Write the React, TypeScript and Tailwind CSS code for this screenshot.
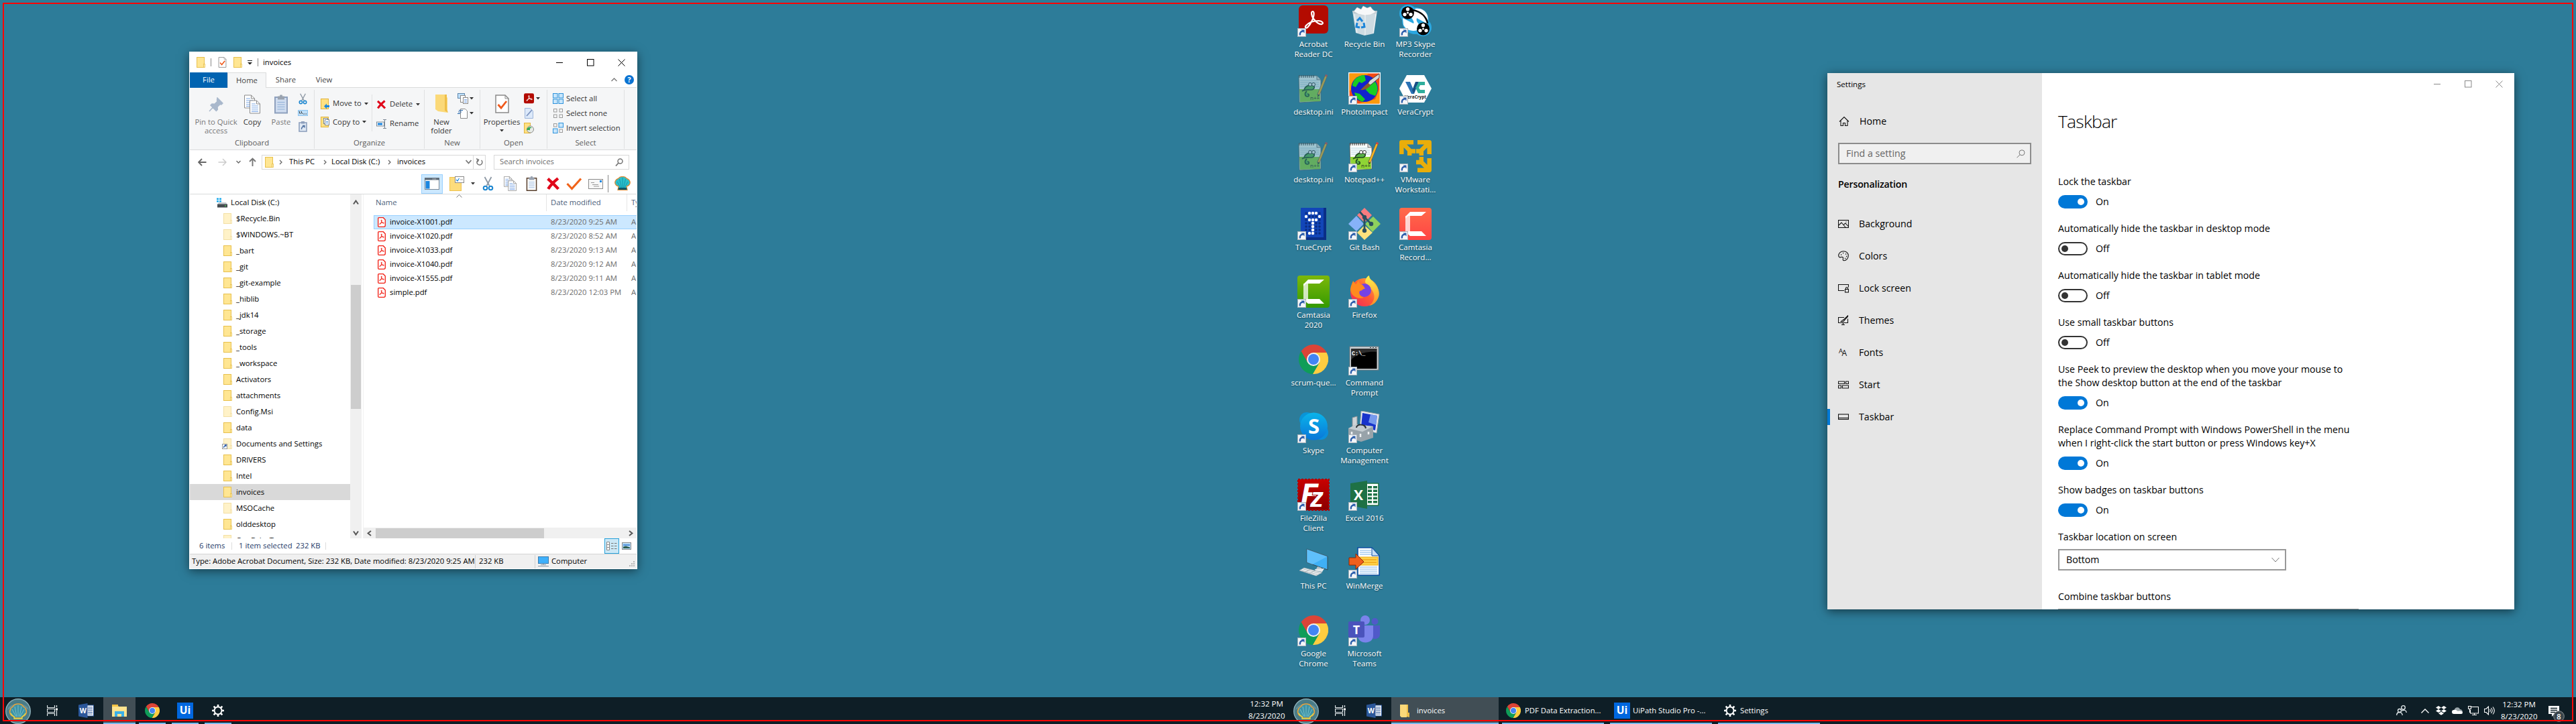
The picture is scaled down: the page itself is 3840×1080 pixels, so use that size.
import React from "react";

type P = { className?: string };
type Kids = { children?: React.ReactNode };

const Svg = ({ w, h, vb, className = "", children }: { w: number; h: number; vb?: string; className?: string } & Kids) => (
  <svg width={w} height={h} viewBox={vb ?? `0 0 ${w} ${h}`} className={`shrink-0 ${className}`} fill="none">
    {children}
  </svg>
);

/* ---------- shared small icons ---------- */

const Folder = ({ className = "" }: P) => (
  <Svg w={13} h={16} className={className}>
    <rect x=".5" y=".5" width="11" height="15" fill="#ffe693" stroke="#e8c04c" />
    <rect x="10.5" y="10.5" width="2" height="5" fill="#ffefb5" stroke="#e8c04c" strokeWidth=".8" />
  </Svg>
);

const DocLines = ({ x = 0, y = 0 }: { x?: number; y?: number }) => (
  <g transform={`translate(${x} ${y})`}>
    <path d="M.5.5h10l5 5v14H.5z" fill="#fff" stroke="#8a8a8a" />
    <path d="M10.5.5v5h5" stroke="#8a8a8a" />
    <path d="M3 5.5h6M3 8.5h10M3 11.5h10M3 14.5h10M3 17h10" stroke="#7fa9e6" strokeWidth="1.2" />
  </g>
);

const CopyDocs = ({ w, h }: { w: number; h: number }) => (
  <Svg w={w} h={h} vb="0 0 24 28">
    <DocLines />
    <DocLines x={8} y={8} />
  </Svg>
);

const Clip = ({ w, h, board, paper }: { w: number; h: number; board: string; paper: string }) => (
  <Svg w={w} h={h} vb="0 0 20 28">
    <rect x="1" y="3.5" width="18" height="23.5" fill={paper} stroke={board} strokeWidth="2" />
    <rect x="5" y="2" width="10" height="5" fill="#9aa3b0" />
    <rect x="8" y="0" width="4" height="3" rx="1" fill="#9aa3b0" />
    <path d="M4.500 11h11M4.500 14.500h11M4.500 18h11M4.500 21.500h11" stroke="#8fb0d8" strokeWidth="1.200" />
  </Svg>
);

const Scissors = ({ w, h }: { w: number; h: number }) => (
  <Svg w={w} h={h} vb="0 0 16 22">
    <path d="M3 1l7 13M13 1L6 14" stroke="#8e99a5" strokeWidth="1.800" />
    <circle cx="4" cy="17.500" r="2.800" stroke="#1b86d0" strokeWidth="2" />
    <circle cx="12" cy="17.500" r="2.800" stroke="#1b86d0" strokeWidth="2" />
  </Svg>
);

const RedX = ({ w, h }: { w: number; h: number }) => (
  <Svg w={w} h={h} vb="0 0 20 19">
    <path d="M2.500 2.500c4 3.500 10 9 15 14.500M17 2C12 6 6 12 3 17" stroke="#e0081a" strokeWidth="4.200" />
  </Svg>
);

const DocCheck = ({ w, h }: { w: number; h: number }) => (
  <Svg w={w} h={h} vb="0 0 21 28">
    <path d="M1 1h14l5 5v21H1z" fill="#fff" stroke="#8a8a8a" strokeWidth="1.500" />
    <path d="M15 1v5h5" stroke="#8a8a8a" />
    <path d="M4.500 15l4.500 5 8-10" stroke="#f0591b" strokeWidth="2.800" />
  </Svg>
);

const Caret = ({ className = "", color = "#333" }: P & { color?: string }) => (
  <Svg w={6} h={4} className={className}>
    <path d="M0 0h6L3 3.500z" fill={color} />
  </Svg>
);

const Chev = ({ className = "", d = "M1 1l3 3-3 3", color = "#666", w = 6, h = 8, sw = 1.3 }: P & { d?: string; color?: string; w?: number; h?: number; sw?: number }) => (
  <Svg w={w} h={h} className={className}>
    <path d={d} stroke={color} strokeWidth={sw} />
  </Svg>
);

const Pdf = () => (
  <Svg w={12} h={15}>
    <path d="M1.700.700h6.600l3 3v8.600a2 2 0 0 1-2 2H1.700a1 1 0 0 1-1-1V1.700a1 1 0 0 1 1-1z" fill="#fff" stroke="#f21d12" strokeWidth="1.300" />
    <path d="M5.800 4c-1 0-.5 2 .5 3.300.9 1.200 2.200 2.100 2.900 1.800.8-.5-.7-1.200-2.200-1-1.800.2-3.600.9-4.100 1.900-.4.900.8.800 1.500-.4C5.500 7.800 6.600 4 5.800 4z" stroke="#f21d12" strokeWidth="1" />
  </Svg>
);

const Swirl = ({ sw = 1.8 }: { sw?: number }) => (
  <path d="M23 10c-3 0-2.500 6 1 11 4 5 9 9 12.500 8 3.500-1.500 0-5-5-5-7 0-14.500 2.500-18.500 7-2.500 3 0 5 2.500 2.500C20 29 25.500 18 24.500 12c-.2-1-.7-2-1.500-2z" stroke="#fff" strokeWidth={sw} />
);

const Shell = ({ w, h }: { w: number; h: number }) => (
  <Svg w={w} h={h} vb="0 0 24 22">
    <path d="M6 15C1 14-.5 9 2 6c1-2 3-2 4-3 1.500-2 4-2.500 6-2.500S16.500 1 18 3c1 1 3 1 4 3 2.500 3 1 8-4 9l1 5.500H5z" fill="#2cc0cb" stroke="#e0862c" strokeWidth="1.200" />
    <path d="M12 2v15M7.500 4l3 13M16.500 4l-3 13M4 8l5 9M20 8l-5 9" stroke="#1593a8" strokeWidth=".9" />
    <path d="M6 17h12l.5 3h-13z" fill="#12586a" />
  </Svg>
);

const Chrome = ({ size }: { size: number }) => (
  <Svg w={size} h={size} vb="2 2 44 44">
    <path d="M5.550 12.020A22 22 0 0 1 43.600 14H24v10l-8.660 5z" fill="#db4437" />
    <path d="M43.600 14A22 22 0 0 1 22.850 45.970L32.660 29 24 24V14z" fill="#ffcd40" />
    <path d="M22.850 45.970A22 22 0 0 1 5.550 12.020L15.340 29 24 24l8.660 5z" fill="#0f9d58" />
    <circle cx="24" cy="24" r="10" fill="#f1f1f1" />
    <circle cx="24" cy="24" r="8" fill="#4285f4" />
  </Svg>
);

/* ---------- explorer ---------- */

const MenuText = ({ children, className = "" }: Kids & P) => <span className={`whitespace-nowrap ${className}`}>{children}</span>;

const Group = ({ label, className = "", children }: { label: string; className?: string } & Kids) => (
  <div className={`flex h-[88px] shrink-0 flex-col border-r border-[#e0e1e2] ${className}`}>
    <div className="h-[71px]">{children}</div>
    <div className="text-center leading-[16px] text-[#5a5a5a]">{label}</div>
  </div>
);

const BigButton = ({ icon, lines, className = "" }: { icon: React.ReactNode; lines: React.ReactNode[]; className?: string }) => (
  <div className={`flex flex-col items-center text-center leading-[13px] ${className}`}>
    <div className="mb-[2px] flex h-[36px] items-center justify-center">{icon}</div>
    {lines.map((l, i) => (
      <div key={i} className="flex h-[13px] items-center whitespace-nowrap">{l}</div>
    ))}
  </div>
);

const MoveIcon = ({ copy = false }: { copy?: boolean }) => (
  <Svg w={14} h={16}>
    <rect x=".5" y=".5" width="11" height="15" fill="#ffe182" stroke="#e2b43c" />
    {copy ? (
      <g>
        <rect x="4.500" y="2.500" width="6" height="8" fill="#fff" stroke="#7a8794" />
        <rect x="6.500" y="4.500" width="6" height="8" fill="#fff" stroke="#7a8794" />
        <path d="M8 7.500h3M8 9.500h3" stroke="#4a90d9" />
      </g>
    ) : (
      <path d="M5 11.500l4-4v2.500h4v3H9v2.500z" fill="#1b86e0" />
    )}
  </Svg>
);

const SelIcon = ({ on }: { on: boolean[] }) => (
  <Svg w={16} h={16}>
    {on.map((o, i) => (
      <rect
        key={i}
        x={(i % 2) * 8.5 + (o ? 0.5 : 1.5)}
        y={Math.floor(i / 2) * 8.5 + (o ? 0.5 : 1.5)}
        width={o ? 6.5 : 4.5}
        height={o ? 6.5 : 4.5}
        fill={o ? "#c8e6fb" : "#f5f6f7"}
        stroke={o ? "#2e93dc" : "#9a9a9a"}
      />
    ))}
  </Svg>
);

const Ribbon = () => (
  <div className="flex h-[93px] shrink-0 border-b border-[#d9dadb] bg-[#f5f6f7] pt-[3px] text-[#333]">
    <Group label="Clipboard" className="w-[186px]">
      <div className="flex pt-[3px]">
        <BigButton
          className="ml-[4px] w-[70px] text-[#777]"
          icon={
            <Svg w={22} h={22} className="mt-[1px]">
              <path d="M13 1l8 8-2 2-2-.5-4 4 .3 4-2 2L3 12l2-2 4 .3 4-4-.5-2zM6.500 15L1 21" fill="#a9b8cc" stroke="#a9b8cc" strokeWidth="1.500" />
            </Svg>
          }
          lines={["Pin to Quick", "access"]}
        />
        <BigButton className="w-[38px]" icon={<CopyDocs w={24} h={29} />} lines={["Copy"]} />
        <BigButton className="ml-[4px] w-[40px] text-[#777]" icon={<Clip w={20} h={29} board="#8ea0bd" paper="#cfdcef" />} lines={["Paste"]} />
        <div className="ml-[3px] flex h-[60px] w-[18px] flex-col items-center justify-between pt-[2px]">
          <Scissors w={13} h={17} />
          <Svg w={15} h={9}>
            <rect x=".5" y=".5" width="14" height="8" fill="#bfe0fa" stroke="#8cc3ee" />
            <path d="M2 2l1.500 4M5 2l1.500 4M8 6h1M10 6h1M12 6h1" stroke="#222" />
          </Svg>
          <Svg w={13} h={16}>
            <rect x="1" y="2" width="11" height="13" fill="#dfe8f3" stroke="#8ea0bd" strokeWidth="1.600" />
            <rect x="4" y="0" width="5" height="3.500" fill="#8ea0bd" />
            <path d="M4.500 12c0-3 1-4.500 4-4.500M6 6.500h3v3" stroke="#5575a3" strokeWidth="1.400" />
          </Svg>
        </div>
      </div>
    </Group>
    <Group label="Organize" className="w-[164px]">
      <div className="flex pl-[9px] pt-[7px]">
        <div className="flex h-[55px] w-[77px] flex-col border-r border-[#e0e1e2]">
          <div className="flex h-[29px] items-center gap-[4px]"><MoveIcon /><MenuText>Move to</MenuText><Caret /></div>
          <div className="flex h-[29px] items-center gap-[4px]"><MoveIcon copy /><MenuText>Copy to</MenuText><Caret /></div>
        </div>
        <div className="flex flex-col pl-[6px]">
          <div className="flex h-[29px] items-center gap-[5px]"><RedX w={15} h={14} /><MenuText>Delete</MenuText><Caret /></div>
          <div className="flex h-[29px] items-center gap-[4px]">
            <Svg w={16} h={14}>
              <rect x=".5" y="4" width="11" height="6" fill="#fff" stroke="#7a8794" />
              <rect x="2" y="5.500" width="7" height="3" fill="#1b86e0" />
              <path d="M10 .5h5M12.500.5v13M10 13.500h5" stroke="#7a8794" />
            </Svg>
            <MenuText>Rename</MenuText>
          </div>
        </div>
      </div>
    </Group>
    <Group label="New" className="w-[83px]">
      <div className="flex pt-[3px]">
        <BigButton
          className="ml-[4px] w-[42px]"
          icon={
            <Svg w={19} h={28}>
              <path d="M0 0h14l4 5v22L4 25 0 22z" fill="#fbd979" />
              <path d="M14 0h3v22l2 5-5-3z" fill="#eebf4a" />
            </Svg>
          }
          lines={["New", "folder"]}
        />
        <div className="flex flex-col gap-[6px] pl-[3px] pt-[2px]">
          <div className="flex items-center gap-[2px]">
            <Svg w={16} h={16}>
              <rect x=".5" y=".5" width="10" height="7" fill="#bfe0fa" stroke="#5d87ad" />
              <rect x="4.500" y="3.500" width="7" height="10" fill="#fff" stroke="#8a8a8a" />
              <rect x="8.500" y="6.500" width="7" height="9" fill="#fff" stroke="#8a8a8a" />
              <path d="M10 9.500h4M10 11.500h4M10 13.500h4" stroke="#7fa9e6" />
            </Svg>
            <Caret />
          </div>
          <div className="flex items-center gap-[2px]">
            <Svg w={16} h={16}>
              <path d="M4.500 1.500h7l3 3v11h-10z" fill="#fff" stroke="#8a8a8a" />
              <path d="M2 3.500h6M1 6h5M0 8.500h4" stroke="#1b5fa8" strokeWidth="1.200" />
            </Svg>
            <Caret />
          </div>
        </div>
      </div>
    </Group>
    <Group label="Open" className="w-[100px]">
      <div className="flex pt-[3px]">
        <BigButton className="ml-[3px] w-[58px]" icon={<DocCheck w={21} h={28} />} lines={["Properties", <Caret key="c" />]} />
        <div className="flex flex-col gap-[6px] pl-[4px] pt-[2px]">
          <div className="flex items-center gap-[3px]">
            <Svg w={15} h={16} vb="0 0 46 48"><rect width="46" height="46" rx="7" fill="#b30b00" /><Swirl sw={3} /></Svg>
            <Caret />
          </div>
          <Svg w={15} h={16}>
            <path d="M1.500.5h8l4 4v11h-12z" fill="#dce9fa" stroke="#9db5da" />
            <path d="M4 12l8-9" stroke="#7c93bf" strokeWidth="1.800" />
          </Svg>
          <Svg w={15} h={16}>
            <rect x=".5" y=".5" width="9" height="15" fill="#ffe182" stroke="#e2b43c" />
            <circle cx="9.500" cy="10" r="5" fill="#e8ece8" stroke="#8a8a8a" />
            <path d="M4 10.500c1-4 5-5 8-3l-3 1v3c-2-1-4 0-5-1z" fill="#35a853" />
          </Svg>
        </div>
      </div>
    </Group>
    <Group label="Select" className="w-[115px]">
      <div className="flex flex-col gap-[6px] pl-[8px] pt-[5px]">
        <div className="flex items-center gap-[4px] leading-[16px]"><SelIcon on={[true, true, true, true]} /><MenuText>Select all</MenuText></div>
        <div className="flex items-center gap-[4px] leading-[16px]"><SelIcon on={[false, false, false, false]} /><MenuText>Select none</MenuText></div>
        <div className="flex items-center gap-[4px] leading-[16px]"><SelIcon on={[false, true, true, false]} /><MenuText>Invert selection</MenuText></div>
      </div>
    </Group>
  </div>
);

const TREE: [string, boolean][] = [
  ["$Recycle.Bin", true], ["$WINDOWS.~BT", true], ["_bart", false], ["_git", false], ["_git-example", false],
  ["_hiblib", false], ["_jdk14", false], ["_storage", false], ["_tools", false], ["_workspace", false],
  ["Activators", false], ["attachments", false], ["Config.Msi", true], ["data", false], ["Documents and Settings", true],
  ["DRIVERS", false], ["Intel", false], ["invoices", false], ["MSOCache", true], ["olddesktop", false], ["OneDriveTemp", true],
];

const FILES = [
  ["invoice-X1001.pdf", "8/23/2020 9:25 AM"], ["invoice-X1020.pdf", "8/23/2020 8:52 AM"], ["invoice-X1033.pdf", "8/23/2020 9:13 AM"],
  ["invoice-X1040.pdf", "8/23/2020 9:12 AM"], ["invoice-X1555.pdf", "8/23/2020 9:11 AM"], ["simple.pdf", "8/23/2020 12:03 PM"],
];

const Explorer = () => (
  <div className="absolute left-[282px] top-[77px] flex h-[772px] w-[668px] flex-col overflow-hidden border border-white bg-white text-[11.3px] text-black shadow-[0_3px_14px_rgba(0,0,0,0.5)]">
    {/* title bar */}
    <div className="flex h-[30px] shrink-0 items-center pl-[10px]">
      <Folder />
      <div className="ml-[8px] h-[12px] w-px bg-[#888]" />
      <div className="ml-[10px]"><DocCheck w={13} h={16} /></div>
      <Folder className="ml-[10px]" />
      <Svg w={7} h={7} className="ml-[8px]"><path d="M0 .5h7" stroke="#222" /><path d="M0 3h7L3.500 6.500z" fill="#222" /></Svg>
      <div className="ml-[8px] h-[12px] w-px bg-[#888]" />
      <span className="ml-[7px]">invoices</span>
      <div className="ml-auto mr-[17px] flex items-center">
        <Svg w={10} h={10} className="mr-[36px]"><path d="M0 5.500h10" stroke="#000" /></Svg>
        <Svg w={11} h={11} className="mr-[35px]"><rect x=".5" y=".5" width="9.500" height="9.500" stroke="#000" /></Svg>
        <Svg w={11} h={11}><path d="M.5.5l10 10M10.500.5l-10 10" stroke="#000" /></Svg>
      </div>
    </div>
    {/* tabs */}
    <div className="flex h-[23px] shrink-0 text-[#444]">
      <div className="flex w-[56px] items-center justify-center bg-[#0063b1] text-white">File</div>
      <div className="flex w-[58px] items-center justify-center border-x border-t border-[#dadbdc] bg-[#f5f6f7]">Home</div>
      <div className="flex flex-1 items-center border-b border-[#dadbdc]">
        <span className="w-[58px] text-center">Share</span>
        <span className="w-[56px] text-center">View</span>
        <Chev className="ml-auto" w={9} h={6} d="M.5 5l4-4 4 4" color="#777" />
        <Svg w={14} h={14} className="ml-[11px] mr-[4px]">
          <circle cx="7" cy="7" r="7" fill="#0a73d2" />
          <text x="7" y="10.800" textAnchor="middle" fontSize="10.500" fontWeight="700" fill="#fff">?</text>
        </Svg>
      </div>
    </div>
    <Ribbon />
    {/* address row */}
    <div className="flex h-[35px] shrink-0 items-center">
      <Svg w={13} h={12} className="ml-[12px]"><path d="M12.500 6H1M6 1L1 6l5 5" stroke="#666" strokeWidth="1.800" /></Svg>
      <Svg w={13} h={12} className="ml-[17px]"><path d="M.5 6H12M7 1l5 5-5 5" stroke="#ccc" strokeWidth="1.500" /></Svg>
      <Chev className="ml-[14px]" w={7} h={5} d="M.5 1l3 3 3-3" color="#666" />
      <Svg w={11} h={13} className="ml-[12px]"><path d="M5.500 13V1.500M1 6l4.500-4.500L10 6" stroke="#777" strokeWidth="1.900" /></Svg>
      <div className="ml-[8px] flex h-[22px] w-[334px] items-center border border-[#d9d9d9] pl-[4px]">
        <Folder />
        <Chev className="ml-[8px]" />
        <span className="ml-[9px] w-[51px] whitespace-nowrap">This PC</span>
        <Chev />
        <span className="ml-[6px] w-[86px] whitespace-nowrap">Local Disk (C:)</span>
        <Chev className="-ml-[2px]" />
        <span className="ml-[8px]">invoices</span>
        <Chev className="ml-auto mr-[2px]" w={9} h={7} d="M.5 1l4 4.500L8.500 1" color="#777" sw={1.8} />
        <div className="flex h-[20px] w-[18px] items-center justify-center border-l border-[#d9d9d9]">
          <Svg w={11} h={12}><path d="M8.500 3A4 4 0 1 1 4 2.500M1 .8l3.500 1.500L3 5.500" stroke="#777" strokeWidth="1.500" /></Svg>
        </div>
      </div>
      <div className="ml-[12px] flex h-[22px] w-[202px] items-center justify-between border border-[#d9d9d9] pl-[8px] pr-[8px] text-[#6d6d6d]">
        <span>Search invoices</span>
        <Svg w={12} h={12}><circle cx="7.500" cy="4.500" r="3.500" stroke="#777" strokeWidth="1.500" /><path d="M5 7L1 11.500" stroke="#777" strokeWidth="1.800" /></Svg>
      </div>
    </div>
    {/* command row */}
    <div className="flex h-[31px] shrink-0 items-center border-b border-[#d9dadb] pl-[345px]">
      <div className="flex h-[29px] w-[32px] shrink-0 items-center justify-center border border-[#99d1ff] bg-[#cce8ff]">
        <Svg w={22} h={18}><rect x=".5" y=".5" width="21" height="17" fill="#fff" stroke="#7a8794" /><path d="M0 2h22" stroke="#5d6b78" strokeWidth="3" /><rect x="1.500" y="5" width="6" height="11.500" fill="#1b86e0" /><path d="M12 2h6" stroke="#fff" strokeDasharray="1 1" /></Svg>
      </div>
      <Svg w={22} h={23} className="ml-[10px]"><rect x=".5" y="1.500" width="17" height="20" fill="#fddc7c" stroke="#eec350" /><rect x="8.500" y=".5" width="13" height="9" fill="#fff" stroke="#8a8a8a" /><path d="M10 5l2 2 2.500-4" stroke="#1b86e0" strokeWidth="1.200" /><path d="M16 5h4" stroke="#999" /></Svg>
      <Caret className="ml-[10px]" />
      <div className="ml-[11px] shrink-0"><Scissors w={17} h={22} /></div>
      <div className="ml-[15px] shrink-0"><CopyDocs w={19} h={22} /></div>
      <div className="ml-[14px] shrink-0"><Clip w={17} h={22} board="#5c4432" paper="#fff" /></div>
      <div className="ml-[13px] shrink-0"><RedX w={21} h={20} /></div>
      <Svg w={24} h={19} className="ml-[9px]"><path d="M1.500 9l7 7.500L22 1.500" stroke="#f0641b" strokeWidth="3.200" /></Svg>
      <Svg w={22} h={15} className="ml-[9px]"><rect x=".5" y=".5" width="21" height="14" fill="#f7f7f7" stroke="#8a8a8a" /><rect x="17" y="2" width="3" height="3" fill="#1b86e0" /><path d="M4 5.500h5M6 8.500h9M8 11h8" stroke="#999" /></Svg>
      <div className="ml-[7px] h-[26px] w-px shrink-0 bg-[#888]" />
      <div className="ml-[9px] shrink-0"><Shell w={24} h={22} /></div>
    </div>
    {/* body */}
    <div className="flex h-[513px] shrink-0 overflow-hidden">
      <div className="h-full w-[239px] shrink-0 overflow-hidden">
        <div className="flex h-[24px] items-center pl-[40px]">
          <Svg w={16} h={15}>
            <path d="M0 .5h3v2.500H0zM4 .5h3v2.500H4zM0 4h3v2.500H0zM4 4h3v2.500H4z" fill="#19a9ec" />
            <path d="M3 7h11l1.500 3H1.500z" fill="#c3c8cc" />
            <rect x="1" y="9.500" width="15" height="5" fill="#454b50" />
            <path d="M12 12h2" stroke="#5f5" />
          </Svg>
          <span className="ml-[5px]">Local Disk (C:)</span>
        </div>
        {TREE.map(([name, faint]) => (
          <div key={name} className={`flex h-[24px] items-center pl-[50px] ${name === "invoices" ? "bg-[#d9d9d9]" : ""}`}>
            <div className="relative">
              <Folder className={faint ? "opacity-50" : ""} />
              {name === "Documents and Settings" && (
                <Svg w={8} h={8} className="absolute -left-[2px] bottom-0"><rect x=".5" y=".5" width="7" height="7" fill="#fff" stroke="#999" /><path d="M2.500 6c0-2 1-3 3-3M4 2h2v2" stroke="#2a5caa" strokeWidth="1.300" /></Svg>
              )}
            </div>
            <span className="ml-[6px] whitespace-nowrap">{name}</span>
          </div>
        ))}
      </div>
      <div className="flex w-[17px] shrink-0 flex-col items-center bg-[#f0f0f0]">
        <Chev className="mt-[8px]" w={9} h={8} d="M1 6.500l3.500-5 3.500 5" color="#555" sw={2} />
        <div className="mt-[119px] h-[185px] w-[15px] shrink-0 bg-[#cdcdcd]" />
        <Chev className="mb-[4px] mt-auto" w={9} h={8} d="M1 1.500l3.500 5 3.500-5" color="#555" sw={2} />
      </div>
      <div className="ml-[2px] flex flex-1 flex-col overflow-hidden border-l border-[#f2f2f2]">
        <div className="flex h-[25px] shrink-0 items-center text-[#4c607a]">
          <div className="relative flex h-full w-[273px] shrink-0 items-center border-r border-[#e5e5e5] pl-[18px]">
            Name
            <Chev className="absolute left-[138px] top-0" w={9} h={5} d="M.5 4.500l4-4 4 4" color="#777" sw={1} />
          </div>
          <div className="flex h-full w-[120px] shrink-0 items-center border-r border-[#e5e5e5] pl-[6px]">Date modified</div>
          <div className="shrink-0 pl-[6px]">Type</div>
        </div>
        <div className="flex flex-col pl-[15px] pt-[6px]">
          {FILES.map(([n, d], i) => (
            <div key={n} className={`flex h-[21px] shrink-0 items-center border border-r-0 pl-[5px] ${i === 0 ? "border-[#99d1ff] bg-[#cce8ff]" : "border-transparent"}`}>
              <Pdf />
              <span className="ml-[6px] w-[240px] shrink-0">{n}</span>
              <span className="w-[120px] shrink-0 whitespace-nowrap text-[#6d6d6d]">{d}</span>
              <span className="shrink-0 text-[#6d6d6d]">A</span>
            </div>
          ))}
        </div>
        <div className="mt-auto flex h-[16px] shrink-0 items-center bg-[#f0f0f0]">
          <Chev className="ml-[5px]" w={7} h={9} d="M6 1L1.500 4.500 6 8" color="#555" sw={2} />
          <div className="ml-[6px] h-[15px] w-[251px] bg-[#cdcdcd]" />
          <Chev className="ml-auto mr-[5px]" w={7} h={9} d="M1 1l4.500 3.500L1 8" color="#555" sw={2} />
        </div>
      </div>
    </div>
    {/* status rows */}
    <div className="flex h-[23px] shrink-0 items-center text-[#1e3a68]">
      <span className="ml-[14px] w-[48px]">6 items</span>
      <div className="h-[11px] w-px bg-[#ddd]" />
      <span className="ml-[10px] w-[85px] whitespace-nowrap">1 item selected</span>
      <span className="w-[44px]">232 KB</span>
      <div className="h-[11px] w-px bg-[#ddd]" />
      <div className="ml-auto flex h-[23px] w-[22px] items-center justify-center border border-[#26a0da] bg-[#cbe8f6]">
        <Svg w={16} h={13}><path d="M.5.500h4v12h-4zM.5 4.500h4M.5 8.500h4" stroke="#888" fill="#fff" /><path d="M7 2.500h3.500M12 2.500h3.500M7 6.500h3.500M12 6.500h3.500M7 10.500h3.500M12 10.500h3.500" stroke="#777" /></Svg>
      </div>
      <Svg w={14} h={11} className="ml-[4px] mr-[8px]"><rect x=".5" y=".5" width="13" height="10" fill="#b9ddf8" stroke="#888" /><path d="M2 3h10v2H2z" fill="#4f8fd9" /><path d="M2 6.500l4-1 6 2V9H2z" fill="#2d5d50" /></Svg>
    </div>
    <div className="flex h-[22px] shrink-0 items-center border-t border-[#d4d4d4] bg-[#f0f0f0]">
      <span className="ml-[3px] w-[422px] whitespace-nowrap">Type: Adobe Acrobat Document, Size: 232 KB, Date modified: 8/23/2020 9:25 AM</span>
      <div className="h-[20px] w-px bg-[#d0d0d0]" />
      <span className="ml-[5px] w-[83px]">232 KB</span>
      <div className="h-[20px] w-px bg-[#d0d0d0]" />
      <Svg w={16} h={15} className="ml-[4px]"><rect x=".5" y=".5" width="15" height="10" fill="#3fb0fb" stroke="#3a7db0" /><path d="M8 11v2M4 12.500h8M0 14.500h16" stroke="#8a9aa8" /></Svg>
      <span className="ml-[4px]">Computer</span>
      <Svg w={9} h={9} className="ml-auto mr-[2px] mt-[8px]"><path d="M6 1h2M3 4h2M6 4h2M0 7h2M3 7h2M6 7h2" stroke="#b5b5b5" strokeWidth="2" /></Svg>
    </div>
  </div>
);

/* ---------- desktop icons ---------- */

const Npp = ({ ghost = false }: { ghost?: boolean }) => (
  <g opacity={ghost ? 0.55 : 1}>
    <path d="M2 5h27l6 6v32L3 45z" fill="#fbfdfb" stroke="#555" strokeWidth=".8" />
    <path d="M3 25h31v18L4 44z" fill="#8fd435" />
    <path d="M4 12h25M4 15h28M4 18h28M4 21h29" stroke="#a9cbe0" strokeWidth=".8" />
    <path d="M3 4v4M6 4v4M9 4v4M12 4v4M15 4v4M18 4v4M21 4v4M24 4v4" stroke="#333" strokeWidth="1" />
    <path d="M29 5v6h6" fill="#ddd" stroke="#555" strokeWidth=".8" />
    <path d="M10 26c2-7 10-8 14-6 3 2 0 6-3 6-4 0-10-1-14 2M14 28c-4 3-3 8 1 8 3 0 3-4 0-4" stroke="#234a1f" strokeWidth="1.600" fill="#57b146" />
    <circle cx="19" cy="18" r="2.500" fill="#fff" stroke="#222" strokeWidth=".9" />
    <circle cx="24" cy="18" r="2.500" fill="#fff" stroke="#222" strokeWidth=".9" />
    <text x="19" y="41" fontSize="8" fill="#222">n++</text>
    <path d="M31 34L43 5" stroke="#555" strokeWidth="4" />
    <path d="M31.500 33L42.500 6" stroke="#f4b223" strokeWidth="2.800" />
    <path d="M42.600 6l1-2.500" stroke="#d64541" strokeWidth="3.400" />
    <path d="M30.200 37l.4-4 2 1z" fill="#222" />
  </g>
);

const CamMark = () => (
  <g>
    <path d="M9 12h7v24L9 40z" fill="#fff" opacity=".75" />
    <path d="M16 6h24l-7 6H13l-4 4v-3zM9 36l6-1h18l7 7H16z" fill="#fff" />
  </g>
);

const Reel = ({ x, y }: { x: number; y: number }) => (
  <g transform={`translate(${x} ${y})`}>
    <circle r="9.500" fill="#000" />
    <circle cx="0" cy="-5.200" r="2.700" fill="#fff" />
    <circle cx="-4.500" cy="2.600" r="2.700" fill="#fff" />
    <circle cx="4.500" cy="2.600" r="2.700" fill="#fff" />
    <circle r="1.500" fill="#fff" />
  </g>
);

const ICONS: Record<string, React.ReactNode> = {
  acrobat: <g><rect x="2" y="1" width="44" height="42" rx="6" fill="#b30b00" /><Swirl sw={2.2} /></g>,
  bin: (
    <g>
      <path d="M6 9h37l-5 34-14 3-13-4z" fill="#dfe6ea" opacity=".9" />
      <path d="M6 9h37l-3 4-15 2-16-2z" fill="#b9c4ca" />
      <path d="M8 10l5-6 6 3 3-5 6 3 5-2 3 4 5 4-8 4-9 1-9-2z" fill="#f6f8f9" stroke="#c5cdd2" strokeWidth=".6" />
      <path d="M25 15v30M9 14l4 28M41 14l-4 28" stroke="#fff" strokeWidth="1" opacity=".8" />
      <path d="M13 24l4-4 4 5M23 27l1 6-5 1M17 34l-5-1 1-6" stroke="#1c85d8" strokeWidth="3" />
    </g>
  ),
  mp3: (
    <g>
      <circle cx="13" cy="13" r="13" fill="#2ba7e0" /><circle cx="35" cy="34" r="13" fill="#2ba7e0" /><circle cx="24" cy="24" r="20" fill="#2ba7e0" />
      <path d="M24 6c14-2 22 10 17 22L26 20c-2 6 4 8 6 14-6 8-22 6-26-4l-1-10 16 8c3-3-6-9-4-16z" fill="#fff" />
      <path d="M20 8c10 2 20 8 22 20" stroke="#000" strokeWidth="2.500" />
      <Reel x={12.500} y={12} /><Reel x={35.500} y={36} />
    </g>
  ),
  nppGhost: <Npp ghost />,
  npp: <Npp />,
  photo: (
    <g>
      <rect width="48" height="48" fill="#fff" />
      <rect x="1.500" y="1.500" width="45" height="45" fill="#f24a14" />
      <path d="M1.500 1.500h30L10 14 1.500 30zM46.500 24v22.500H14L40 40z" fill="#fb9a0b" />
      <circle cx="24" cy="24" r="20" fill="#1122cc" />
      <path d="M10 10c6-5 10-6 14-6l2 8-6 4-4-2-5 8-5-2c0-4 2-7 4-10zM28 20l12-6c4 6 5 14 0 21l-8-3-6-6zM9 30l8 2 8 8-4 4C15 42 10 36 9 30z" fill="#18cc22" />
      <path d="M46 2L32 12l-6 9 8-3 12-10z" fill="#d9d9d9" stroke="#333" strokeWidth=".8" />
      <path d="M30 16c-5 2-7 6-12 10 6 1 12-2 15-7z" fill="#8a5a2b" />
    </g>
  ),
  vera: (
    <g>
      <path d="M11 4h26l11 20-11 21H11L0 24z" fill="#fff" />
      <path d="M9 14h7l6 14v4h-4z" fill="#2a72b5" /><path d="M22 32l7-18h-5l-5 13z" fill="#174f86" />
      <path d="M38 14h-9l-5 9 4 8h10v-5h-7l-2-3 2-4h7z" fill="#2fae9c" />
      <text x="24" y="38.500" textAnchor="middle" fontSize="6.400" fontWeight="700" fill="#222">VeraCrypt</text>
    </g>
  ),
  vm: (
    <g stroke="#eaae0a" strokeWidth="6.500">
      <path d="M3.300 21V3.300H21M4 4l12 12M15.200 23v-6.500H24" strokeLinejoin="round" />
      <path d="M44.700 21V3.300H27M44 4L32 16M32.800 23v-6.500H25" strokeLinejoin="round" />
      <path d="M44.700 27v17.700H27M44 44L33 33M32.800 25v8H25" strokeLinejoin="round" />
    </g>
  ),
  true: (
    <g>
      <rect x="5" width="38" height="48" fill="#1246b8" />
      <path d="M39 0h4v48h-4zM5 44h38v4H5z" fill="#0a2f87" />
      {[12, 17, 22, 27, 32].map((x) => [8, 13, 18, 23, 28, 33, 38].map((y) => <circle key={`${x}-${y}`} cx={x + 1} cy={y} r="1.700" fill="#0b2c80" />))}
      <g fill="#fff">
        {[[18, 8], [23, 8], [28, 8], [13, 13], [33, 13], [18, 18], [23, 18], [28, 18], [23, 23], [23, 28], [23, 33], [18, 38], [23, 38]].map(([x, y]) => (
          <circle key={`${x}.${y}`} cx={x} cy={y} r="2.200" />
        ))}
      </g>
    </g>
  ),
  git: (
    <g>
      <path d="M24 0l11 11-11 11-11-11z" fill="#f87c80" /><path d="M12 12l11 12-11 11L0 24z" fill="#86b2f8" />
      <path d="M37 13l11 11-12 12-11-12z" fill="#8ed15e" /><path d="M24 26l12 11-12 11-11-11z" fill="#fce27d" />
      <path d="M17 6l7 8v20M24 14l10 10" stroke="#2a4f5f" strokeWidth="2.800" />
      <circle cx="24" cy="14" r="3.200" fill="#2a4f5f" /><circle cx="24" cy="34" r="3.200" fill="#2a4f5f" /><circle cx="34" cy="24" r="3.200" fill="#2a4f5f" />
    </g>
  ),
  camR: <g><rect width="48" height="48" rx="4" fill="url(#camr)" /><CamMark /></g>,
  camG: <g><rect width="48" height="48" rx="4" fill="url(#camg)" /><CamMark /></g>,
  firefox: (
    <g>
      <circle cx="24" cy="25" r="21" fill="url(#ff1)" />
      <path d="M25 10c0-4 2-8 6-10 0 6 6 8 8 12 6 6 8 14 6 20-3 8-8 12-14 13 8-6 9-14 6-20-2-5-6-6-12-15z" fill="url(#ff2)" />
      <circle cx="24" cy="22" r="10" fill="#7542e5" />
      <path d="M3 22C3 16 6 11 7 8l4 5c2-1 2-3 4-6 1 4 2 5 6 7 2 2 3 4 4 6-3-1-4 3-8 3-2 3 0 8 6 10-9 3-18-2-20-11z" fill="#ff8a1f" />
    </g>
  ),
  chrome: <foreignObject x="2" y="2" width="44" height="44"><Chrome size={44} /></foreignObject>,
  cmd: (
    <g>
      <rect x="2" y="5" width="43" height="35" fill="#cdd3d6" stroke="#6e777c" />
      <rect x="4" y="8" width="38.500" height="30" fill="#000" />
      <path d="M4 8h38v5C25 12 10 17 4 25z" fill="#fff" opacity=".18" />
      <path d="M32 6.500h2M36 6.500h2M40 6.500h2" stroke="#444" />
      <text x="5" y="18" fontSize="8.500" fontFamily="Liberation Mono, monospace" fontWeight="700" fill="#fff">C:\_</text>
    </g>
  ),
  skype: (
    <g>
      <circle cx="14" cy="13" r="11" fill="#0895d8" /><circle cx="35" cy="32" r="11" fill="#0a8edb" />
      <circle cx="24.500" cy="23" r="20.500" fill="url(#sky)" />
      <text x="24.500" y="34" textAnchor="middle" fontSize="31" fontWeight="700" fill="#fff">S</text>
    </g>
  ),
  mgmt: (
    <g>
      <path d="M6 10l7-2v20H6z" fill="#cfd3d6" stroke="#8b9297" />
      <path d="M19 0l27 5-4 28-25-7z" fill="#e8ecef" stroke="#9aa3a9" />
      <path d="M21 3l22 4-3 22-21-6z" fill="#1834cc" /><path d="M33 5l10 2-2 14-11-4z" fill="#8fb4f5" opacity=".8" />
      <path d="M0 26l12-6 25 3v17l-18 6L0 40z" fill="#98a3aa" />
      <path d="M0 26l12-6 25 3-16 8z" fill="#c4ccd1" />
      <path d="M12 25c0-6 13-6 14 1" stroke="#2c3236" strokeWidth="2" />
      <path d="M5 31v4M18 34v5M30 31v4" stroke="#eef1f3" strokeWidth="2.500" />
    </g>
  ),
  fz: (
    <g>
      <rect x="1" y="1" width="46" height="46" fill="url(#fz)" stroke="#b00000" strokeWidth="2" strokeDasharray="3 2" />
      <g fontFamily="Liberation Sans, sans-serif" fontWeight="700" fontStyle="italic" fill="#fff" stroke="#fff">
        <text x="6" y="36" fontSize="40">F</text>
        <text x="19" y="42" fontSize="40" stroke="#9c0000" strokeWidth="2" paintOrder="stroke">z</text>
      </g>
    </g>
  ),
  excel: (
    <g>
      <rect x="24" y="7" width="21" height="33" rx="1" fill="#fff" stroke="#1e7145" strokeWidth="1.600" />
      <path d="M29 11h6v3.500h-6zM37 11h6v3.500h-6zM29 16.500h6V20h-6zM37 16.500h6V20h-6zM29 22h6v3.500h-6zM37 22h6v3.500h-6zM29 27.500h6V31h-6zM37 27.500h6V31h-6zM29 33h6v3.500h-6zM37 33h6v3.500h-6z" fill="#1e7145" />
      <path d="M3 7l25-4v42L3 40z" fill="#1e7145" />
      <text x="15" y="32" textAnchor="middle" fontSize="21" fontWeight="700" fill="#fff">X</text>
    </g>
  ),
  pc: (
    <g>
      <path d="M14 4l31 11v20L14 24z" fill="#3fb0f6" stroke="#33464f" /><path d="M14 4l31 11L22 27l-8-3z" fill="#7fd0ff" opacity=".5" />
      <path d="M30 30l6 2-1 4h-8z" fill="#b8c2c7" />
      <path d="M26 34l14-1-3 5-10-1z" fill="#e3e8ea" />
      <path d="M3 36l7-4 27 7-9 5z" fill="#eef1f2" stroke="#9aa5ab" strokeWidth=".7" />
      <path d="M6 36l24 6M9 34l24 6M11 39l8-5M18 41l8-5" stroke="#9aa5ab" strokeWidth=".7" />
    </g>
  ),
  merge: (
    <g>
      <path d="M14 2h21l11 12v29H14z" fill="#fff" stroke="#0d4fa3" strokeWidth="1.600" />
      <path d="M17 6h17M17 9h17M17 12h20M17 34h26M17 37h26M17 40h26M17 31h26" stroke="#a9cdf0" strokeWidth="1.600" />
      <path d="M35 2v12h11z" fill="#c9e0f7" stroke="#0d4fa3" />
      <rect x="14" y="16" width="30" height="12" fill="#ffd24a" stroke="#eda90f" />
      <path d="M17 20h25M17 24h25" stroke="#f0a51a" strokeWidth="1.600" />
      <path d="M1 17h10v-6l12 12-12 11v-6H1z" fill="#f0601e" stroke="#8e2605" />
    </g>
  ),
  teams: (
    <g>
      <circle cx="25" cy="9" r="7" fill="#7b83eb" /><circle cx="39.500" cy="11" r="5" fill="#5059c9" />
      <path d="M32 17h15v13c0 9-13 9-13 3z" fill="#5059c9" />
      <path d="M14 17h23v15c0 14-23 14-23 0z" fill="#7b83eb" />
      <rect y="11" width="24" height="24" rx="2" fill="#4b53bc" />
      <text x="12" y="29.500" textAnchor="middle" fontSize="18" fontWeight="700" fill="#fff">T</text>
    </g>
  ),
};

type DI = [string, string[], boolean];
const COLS: DI[][] = [
  [
    ["acrobat", ["Acrobat", "Reader DC"], true], ["nppGhost", ["desktop.ini"], false], ["nppGhost", ["desktop.ini"], false],
    ["true", ["TrueCrypt"], true], ["camG", ["Camtasia", "2020"], true], ["chrome", ["scrum-que..."], false],
    ["skype", ["Skype"], true], ["fz", ["FileZilla", "Client"], true], ["pc", ["This PC"], false], ["chrome", ["Google", "Chrome"], true],
  ],
  [
    ["bin", ["Recycle Bin"], false], ["photo", ["PhotoImpact"], true], ["npp", ["Notepad++"], true], ["git", ["Git Bash"], true],
    ["firefox", ["Firefox"], true], ["cmd", ["Command", "Prompt"], true], ["mgmt", ["Computer", "Management"], true],
    ["excel", ["Excel 2016"], true], ["merge", ["WinMerge"], true], ["teams", ["Microsoft", "Teams"], true],
  ],
  [
    ["mp3", ["MP3 Skype", "Recorder"], true], ["vera", ["VeraCrypt"], true], ["vm", ["VMware", "Workstati..."], true], ["camR", ["Camtasia", "Record..."], true],
  ],
];

const DesktopIcon = ({ icon, lines, shortcut }: { icon: string; lines: string[]; shortcut: boolean }) => (
  <div className="flex h-[101px] w-[76px] flex-col items-center">
    <Svg w={48} h={48}>
      {ICONS[icon]}
      {shortcut && (
        <g>
          <rect x=".5" y="35.500" width="12" height="12" fill="#f4f6f8" stroke="#a9b2ba" />
          <path d="M4 45.500c-.6-4 1-5.800 4-5.800" stroke="#2a5caa" strokeWidth="2.400" /><path d="M5.500 37.500h5v5z" fill="#2a5caa" />
        </g>
      )}
    </Svg>
    <div className="mt-[3px] text-center text-[11.6px] leading-[15px] text-white [text-shadow:0_1px_2px_rgba(0,0,0,0.5)]">
      {lines.map((l) => <div key={l} className="whitespace-nowrap">{l}</div>)}
    </div>
  </div>
);

/* ---------- settings ---------- */

const NAV: [string, React.ReactNode][] = [
  ["Background", <g key="b"><rect x=".5" y="2.500" width="15" height="11" /><path d="M1 10l4-4 6 7M8.500 9l2.500-2 4 4.500" /><path d="M11.500 5h1" /></g>],
  ["Colors", <g key="c"><path d="M8 .7c4.500 0 7.300 3 7.300 6.800S12 14.700 9 14.700c-2 0-2-1.500-1.500-3C8 10 6.500 9 5 9.500 3 10.500.7 9.500.7 7.500.7 3.500 4 .7 8 .7z" /><path d="M4 6h1.200M7 3.500h1.200M11 5h1.200M12 8.500h1.200M10 11.500h1.200" strokeWidth="1.500" /></g>],
  ["Lock screen", <g key="l"><path d="M9 11.500H.5v-9h15v4" /><rect x="10.500" y="9.500" width="5" height="4.500" /><path d="M11.500 9.500V8c0-2 3-2 3 0v1.500" /></g>],
  ["Themes", <g key="t"><path d="M9 3.500H.5v8h14v-6M7.500 11.500v3M5 14.500h5" /><path d="M14.500.8L8 7l1 1.200 5.500-6zM8 7c-2 0-2 2-3.500 2.500C6.500 10 9 9.500 9 8.200" /></g>],
  ["Fonts", <g key="f" />],
  ["Start", <g key="s"><path d="M.5 3h9v3.500h-9zM11.500 3h4v3.500h-4zM.5 9h4v4h-4zM6.500 9h9v4h-9z" /></g>],
  ["Taskbar", <g key="k"><rect x=".5" y="4" width="15" height="7.500" /><path d="M.5 9.500h15" /></g>],
];

const Toggle = ({ on }: { on: boolean }) => (
  <div className="flex h-[20px] items-center">
    <div className={`flex h-[20px] w-[44px] items-center rounded-full ${on ? "justify-end bg-[#0078d7] pr-[5px]" : "border-2 border-[#333] pl-[3px]"}`}>
      <div className={`h-[10px] w-[10px] rounded-full ${on ? "bg-white" : "bg-[#333]"}`} />
    </div>
    <span className="ml-[12px]">{on ? "On" : "Off"}</span>
  </div>
);

const SETTINGS: [string[], boolean][] = [
  [["Lock the taskbar"], true],
  [["Automatically hide the taskbar in desktop mode"], false],
  [["Automatically hide the taskbar in tablet mode"], false],
  [["Use small taskbar buttons"], false],
  [["Use Peek to preview the desktop when you move your mouse to", "the Show desktop button at the end of the taskbar"], true],
  [["Replace Command Prompt with Windows PowerShell in the menu", "when I right-click the start button or press Windows key+X"], true],
  [["Show badges on taskbar buttons"], true],
];

const Settings = () => (
  <div className="absolute left-[2724px] top-[109px] flex h-[800px] w-[1024px] overflow-hidden bg-white text-[14.2px] text-black shadow-[0_3px_14px_rgba(0,0,0,0.55)]">
    <div className="w-[320px] shrink-0 bg-[#e6e6e6]">
      <div className="flex h-[34px] items-center pl-[14px] text-[11.6px]">Settings</div>
      <div className="mt-[18px] flex h-[40px] items-center pl-[17px]">
        <Svg w={16} h={16}><path d="M1 8.500L8 1.500l7 7M3 7v7.500h3.500v-4h3v4H13V7" stroke="#111" strokeWidth="1.100" /></Svg>
        <span className="ml-[15px]">Home</span>
      </div>
      <div className="ml-[16px] mt-[12px] flex h-[32px] w-[288px] items-center justify-between border-2 border-[#8c8c8c] bg-[#f0f0f0] pl-[10px] pr-[7px] text-[#666]">
        Find a setting
        <Svg w={13} h={13}><circle cx="8" cy="4.800" r="4" stroke="#777" /><path d="M5 7.800L.5 12.300" stroke="#777" /></Svg>
      </div>
      <div className="ml-[16px] mt-[20px] h-[20px] font-semibold leading-[20px] tracking-[-0.2px]">Personalization</div>
      <div className="mt-[25px]">
        {NAV.map(([n, icon]) => (
          <div key={n} className="flex h-[48px] items-center">
            <div className={`h-[24px] w-[4px] ${n === "Taskbar" ? "bg-[#0078d7]" : ""}`} />
            <Svg w={16} h={16} className="ml-[12px]">
              {n === "Fonts" ? (
                <g fill="#111"><text x="1" y="9" fontSize="9.500">A</text><text x="5.500" y="13" fontSize="12">A</text></g>
              ) : (
                <g stroke="#111" strokeWidth="1.100">{icon}</g>
              )}
            </Svg>
            <span className="ml-[15px]">{n}</span>
          </div>
        ))}
      </div>
    </div>
    <div className="flex-1 pl-[24px]">
      <div className="flex h-[33px] items-center justify-end pr-[17px]">
        <Svg w={11} h={11} className="mr-[35px]"><path d="M0 5.500h10" stroke="#888" /></Svg>
        <Svg w={11} h={11} className="mr-[35px]"><rect x=".5" y=".5" width="9.500" height="9.500" stroke="#888" /></Svg>
        <Svg w={11} h={11}><path d="M.5.5l10 10M10.500.5l-10 10" stroke="#888" /></Svg>
      </div>
      <div className="mt-[20px] h-[40px] text-[26.500px] font-light leading-[38px] tracking-[-0.8px]">Taskbar</div>
      <div className="mt-[59px] flex flex-col gap-[20px]">
        {SETTINGS.map(([lines, on]) => (
          <div key={lines[0]}>
            {lines.map((l) => <div key={l} className="h-[20px] whitespace-nowrap leading-[20px]">{l}</div>)}
            <div className="mt-[10px]"><Toggle on={on} /></div>
          </div>
        ))}
      </div>
      <div className="mt-[20px] leading-[20px]">Taskbar location on screen</div>
      <div className="mt-[8px] flex h-[32px] w-[340px] items-center justify-between border-2 border-[#999] pl-[10px] pr-[8px]">
        Bottom
        <Chev w={12} h={8} d="M.5 1l5.500 6 5.500-6" color="#777" sw={1} />
      </div>
      <div className="mt-[29px] leading-[20px]">Combine taskbar buttons</div>
      <div className="mt-[8px] h-[32px] w-[448px] border-2 border-[#999]" />
    </div>
  </div>
);

/* ---------- taskbar ---------- */

const Orb = () => (
  <Svg w={38} h={38}>
    <circle cx="19" cy="19" r="18.300" fill="url(#orb)" stroke="#8fb3bd" strokeWidth="1.300" />
    <path d="M3 17C5 5 33 5 35 17c-8-5-24-5-32 0z" fill="#fff" opacity=".16" />
    <path d="M13 27c-6-1-8-7-5-12 1-2 3-2 4-4 2-3 5-3 7-3s5 0 7 3c1 2 3 2 4 4 3 5 1 11-5 12l-1 2H14z" fill="#3f93a5" stroke="#e9a23b" strokeWidth="1.500" />
    <path d="M19 10v17M14 12l3 15M24 12l-3 15M10 16l6 11M28 16l-6 11" stroke="#79c3cf" strokeWidth=".9" />
    <path d="M8 22c2 4 4 4 5 5v3h12v-3c1-1 3-1 5-5" stroke="#e8e04a" strokeWidth="1.300" />
  </Svg>
);

const TaskView = () => (
  <Svg w={16} h={16}>
    <path d="M.5 0v3.500h11V0M.5 16v-3.500h11V16M.5 5.500h11v5H.5zM14.500 0v3M14.500 8v8" stroke="#e8eef0" strokeWidth="1.200" />
    <rect x="13" y="4.500" width="3" height="3" fill="#fff" />
  </Svg>
);

const Word = () => (
  <Svg w={23} h={22}>
    <rect x="11" y="3" width="11.500" height="16" fill="#fff" stroke="#2b579a" />
    <path d="M14 6h7M14 8.500h7M14 11h7M14 13.500h7M14 16h7" stroke="#2b579a" />
    <path d="M0 2.500L13.500 0v22L0 19.500z" fill="#2b579a" />
    <text x="6.800" y="15" textAnchor="middle" fontSize="10.500" fontWeight="700" fill="#fff">W</text>
  </Svg>
);

const Ui = () => (
  <div className="flex h-[24px] w-[24px] shrink-0 items-center justify-center bg-[#0067df] text-[15.500px] font-bold leading-none text-white">Ui</div>
);

const Gear = () => (
  <Svg w={18} h={18}>
    <circle cx="9" cy="9" r="5.500" stroke="#fff" strokeWidth="2" />
    <path d="M9 0v3M9 15v3M0 9h3M15 9h3M2.600 2.600l2.200 2.200M13.200 13.200l2.200 2.200M2.600 15.400l2.200-2.200M13.200 4.800l2.200-2.200" stroke="#fff" strokeWidth="2.600" />
  </Svg>
);

const OpenFolder = () => (
  <Svg w={22} h={18}>
    <path d="M0 1h8l2 2h12v15H0z" fill="#ffe48f" /><path d="M0 0h9v3H0z" fill="#f6c443" /><path d="M4 10h14v8h-4v-4H8v4H4z" fill="#3bb1e8" />
  </Svg>
);

const TBtn = ({ className = "", active = false, children }: { className?: string; active?: boolean } & Kids) => (
  <div className={`flex h-[40px] shrink-0 flex-col ${active ? "bg-[#414e55]" : ""} ${className}`}>
    <div className="flex h-[38px] items-center">{children}</div>
    <div className="h-[2px] bg-[#76b9ed]" />
  </div>
);

const Clock = ({ className = "" }: P) => (
  <div className={`text-center text-[11.500px] leading-[18px] text-white ${className}`}>
    <div>12:32 PM</div>
    <div>8/23/2020</div>
  </div>
);

const Taskbar = () => (
  <div className="absolute bottom-0 left-0 flex h-[40px] w-full bg-[#0e1e26] text-[11.300px] text-white">
    <div className="flex h-full w-[1920px] shrink-0">
      <div className="ml-[8px] pt-[2px]"><Orb /></div>
      <div className="ml-[24px] pt-[12px]"><TaskView /></div>
      <div className="ml-[31px] pt-[9px]"><Word /></div>
      <TBtn active className="ml-[14px] w-[48px]"><div className="mx-auto pt-[2px]"><OpenFolder /></div></TBtn>
      <TBtn className="ml-[5px] w-[40px]"><div className="mx-auto pt-[2px]"><Chrome size={22} /></div></TBtn>
      <TBtn className="ml-[9px] w-[40px]"><div className="mx-auto pt-[2px]"><Ui /></div></TBtn>
      <TBtn className="ml-[9px] w-[40px]"><div className="mx-auto pt-[2px]"><Gear /></div></TBtn>
      <Clock className="ml-auto mr-[5px] w-[54px] pt-[1px]" />
    </div>
    <div className="flex h-full w-[1920px] shrink-0">
      <div className="ml-[8px] pt-[2px]"><Orb /></div>
      <div className="ml-[24px] pt-[12px]"><TaskView /></div>
      <div className="ml-[31px] pt-[9px]"><Word /></div>
      <TBtn active className="ml-[14px] w-[160px]">
        <Svg w={15} h={19} className="ml-[13px] mt-[2px]"><path d="M0 0h10v19H2l-2-2z" fill="#fbd979" /><path d="M10 0h2v12h2v7l-4-1z" fill="#eebf4a" /></Svg>
        <span className="ml-[10px] mt-[2px]">invoices</span>
      </TBtn>
      <TBtn className="ml-[5px] w-[152px]">
        <div className="ml-[6px] mt-[2px]"><Chrome size={22} /></div>
        <span className="ml-[6px] mt-[2px] whitespace-nowrap">PDF Data Extraction...</span>
      </TBtn>
      <TBtn className="ml-[9px] w-[152px]">
        <div className="ml-[6px] mt-[2px]"><Ui /></div>
        <span className="ml-[4px] mt-[2px] whitespace-nowrap">UiPath Studio Pro -...</span>
      </TBtn>
      <TBtn className="ml-[9px] w-[152px]">
        <div className="ml-[9px] mt-[2px]"><Gear /></div>
        <span className="ml-[6px] mt-[2px]">Settings</span>
      </TBtn>
      <div className="ml-auto flex items-center">
        <Svg w={16} h={16}><g stroke="#e8eef0" strokeWidth="1.300"><circle cx="10.500" cy="3.500" r="2.800" /><circle cx="5" cy="8" r="2.500" /><path d="M.7 15c0-6 8.500-6 8.500 0M8.500 8.500c3-2.500 6.500-1 6.800 2.500" /></g></Svg>
        <Chev className="ml-[21px]" w={12} h={7} d="M.5 6.500L6 1l5.500 5.500" color="#fff" />
        <Svg w={16} h={14} className="ml-[10px]"><path d="M4 0l4 2.500L4 5 0 2.500zM12 0l4 2.500L12 5 8 2.500zM4 5l4 2.500L4 10 0 7.500zM12 5l4 2.500-4 2.500-4-2.500zM8 8.800l4 2.500-4 2.500-4-2.500z" fill="#fff" /></Svg>
        <Svg w={16} h={12} className="ml-[8px]"><path d="M4 7a4 4 0 0 1 8-3c3 0 4 3 4 4H4z" fill="#9aa5aa" /><path d="M3 11a3 3 0 0 1 0-6c3-1 4 1 6 2 4-1 7 0 7 2s-2 2-3 2z" fill="#fff" /></Svg>
        <Svg w={16} h={14} className="ml-[8px]"><path d="M3.500 6v5h12V1.500H5M9.500 11v2.500M6 13.500h7M.5.5h4v4h-4zM2.500 4.500V10" stroke="#fff" strokeWidth="1.100" /></Svg>
        <Svg w={16} h={14} className="ml-[8px]"><path d="M.5 4.500h2.500l3.500-3.500v12L3 9.500H.5zM8.500 5c1 1 1 3 0 4M10.500 3c2 2.500 2 5.500 0 8M13 1.500c3 3.500 3 7.500 0 11" stroke="#fff" strokeWidth="1.100" /></Svg>
        <Clock className="ml-[9px] w-[54px]" />
        <Svg w={26} h={26} className="ml-[17px] mr-[15px] mt-[12px]">
          <path d="M0 0h16v12H9l-4 4v-4H0z" fill="#fff" />
          <path d="M3 3.500h10M3 6.500h10M3 9.500h7" stroke="#0e1e26" strokeWidth="1.300" />
          <circle cx="15.500" cy="15.500" r="7.800" fill="#3a444a" stroke="#8c9498" />
          <text x="15.500" y="19.500" textAnchor="middle" fontSize="11" fontWeight="600" fill="#fff">8</text>
        </Svg>
      </div>
    </div>
  </div>
);

const Defs = () => (
  <svg width="0" height="0" className="absolute">
    <defs>
      <linearGradient id="camr" x1="0" y1="0" x2="0" y2="1"><stop stopColor="#ff6b4a" /><stop offset="1" stopColor="#ff4444" /></linearGradient>
      <linearGradient id="camg" x1="0" y1="0" x2="0" y2="1"><stop stopColor="#7db80a" /><stop offset="1" stopColor="#339900" /></linearGradient>
      <linearGradient id="ff1" x1="1" y1="0" x2="0" y2="1"><stop stopColor="#ffc43d" /><stop offset=".5" stopColor="#ff5a35" /><stop offset="1" stopColor="#f0235f" /></linearGradient>
      <linearGradient id="ff2" x1="0" y1="0" x2="0" y2="1"><stop stopColor="#fff04d" /><stop offset="1" stopColor="#ff8d27" /></linearGradient>
      <linearGradient id="sky" x1="0" y1="0" x2="0" y2="1"><stop stopColor="#0ab4ea" /><stop offset="1" stopColor="#0a76d8" /></linearGradient>
      <linearGradient id="fz" x1="0" y1="0" x2="0" y2="1"><stop stopColor="#c80000" /><stop offset="1" stopColor="#8a0000" /></linearGradient>
      <radialGradient id="orb"><stop stopColor="#2f7583" /><stop offset="1" stopColor="#4f7d88" /></radialGradient>
    </defs>
  </svg>
);

export default function App() {
  return (
    <div className="relative h-[1080px] w-[3840px] overflow-hidden bg-[#2d7c99] font-['Open_Sans','Noto_Sans',sans-serif]">
      <Defs />
      <div className="absolute left-[1920px] top-[7px] flex">
        {COLS.map((col, i) => (
          <div key={i} className="flex flex-col">
            {col.map(([icon, lines, sc], j) => <DesktopIcon key={j} icon={icon} lines={lines} shortcut={sc} />)}
          </div>
        ))}
      </div>
      <Explorer />
      <Settings />
      <Taskbar />
      <div className="absolute left-[4px] top-[4px] h-[1072px] w-[3832px] border-2 border-[#fa0505]" />
    </div>
  );
}
